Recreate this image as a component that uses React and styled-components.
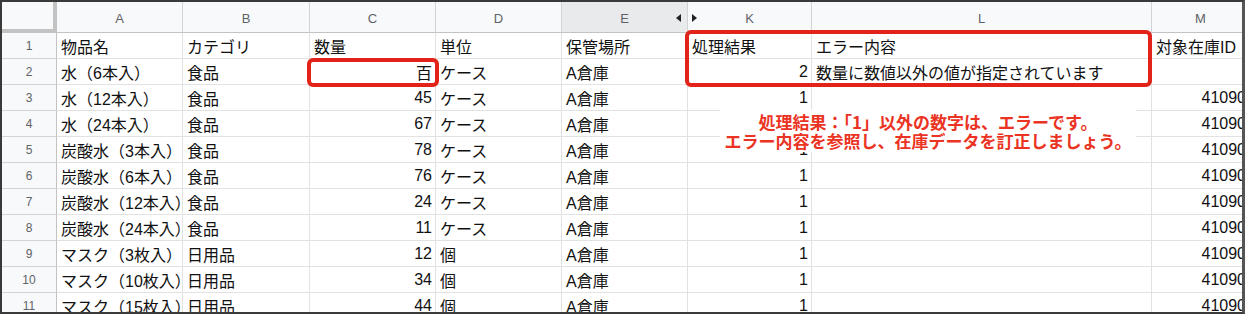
import React from "react";
import styled, { createGlobalStyle } from "styled-components";

const GlobalStyle = createGlobalStyle`
  body {
    margin: 0;
    background: #fff;
  }
`;

const COLS = [
  { key: "A", width: 126 },
  { key: "B", width: 127 },
  { key: "C", width: 126 },
  { key: "D", width: 126 },
  { key: "E", width: 126, hiddenAfter: true },
  { key: "K", width: 124, hiddenBefore: true },
  { key: "L", width: 340 },
  { key: "M", width: 98 },
];

// [A, B, C, D, E, K, L, M]
const ROWS = [
  ["物品名", "カテゴリ", "数量", "単位", "保管場所", "処理結果", "エラー内容", "対象在庫ID"],
  ["水（6本入）", "食品", "百", "ケース", "A倉庫", "2", "数量に数値以外の値が指定されています", ""],
  ["水（12本入）", "食品", "45", "ケース", "A倉庫", "1", "", "41090"],
  ["水（24本入）", "食品", "67", "ケース", "A倉庫", "1", "", "41090"],
  ["炭酸水（3本入）", "食品", "78", "ケース", "A倉庫", "1", "", "41090"],
  ["炭酸水（6本入）", "食品", "76", "ケース", "A倉庫", "1", "", "41090"],
  ["炭酸水（12本入）", "食品", "24", "ケース", "A倉庫", "1", "", "41090"],
  ["炭酸水（24本入）", "食品", "11", "ケース", "A倉庫", "1", "", "41090"],
  ["マスク（3枚入）", "日用品", "12", "個", "A倉庫", "1", "", "41090"],
  ["マスク（10枚入）", "日用品", "34", "個", "A倉庫", "1", "", "41090"],
  ["マスク（15枚入）", "日用品", "44", "個", "A倉庫", "1", "", "41090"],
];

const Frame = styled.div`
  position: relative;
  width: 1245px;
  height: 314px;
  overflow: hidden;
  box-sizing: border-box;
  padding: 2px 0 0 2px;
  background: #fff;
  font-family: "Liberation Sans", "Noto Sans CJK JP", sans-serif;

  &::after {
    content: "";
    position: absolute;
    inset: 0;
    border: 2px solid #3a3a3a;
    border-right: 3px solid #555;
    pointer-events: none;
  }
`;

const Grid = styled.div`
  display: grid;
  grid-template-columns: 55px ${COLS.map((c) => c.width + "px").join(" ")};
  grid-template-rows: 31px repeat(11, 26px);
`;

const Corner = styled.div`
  box-sizing: border-box;
  background: #f8f9fa;
  border-right: 4px solid #c3c3c3;
  border-bottom: 4px solid #c3c3c3;
`;

const ColHeader = styled.div`
  position: relative;
  box-sizing: border-box;
  display: flex;
  align-items: center;
  justify-content: center;
  background: ${(p) => (p.$shade ? "#e9eaeb" : "#f8f9fa")};
  border-right: 1px solid #d3d3d3;
  border-bottom: 1px solid #c3c3c3;
  color: #5f6368;
  font-size: 13px;
  padding-top: 2px;
`;

const ArrowLeft = styled.span`
  position: absolute;
  right: 6px;
  top: 12px;
  width: 0;
  height: 0;
  border-top: 4px solid transparent;
  border-bottom: 4px solid transparent;
  border-right: 5px solid #222;
`;

const ArrowRight = styled.span`
  position: absolute;
  left: 4px;
  top: 12px;
  width: 0;
  height: 0;
  border-top: 4px solid transparent;
  border-bottom: 4px solid transparent;
  border-left: 5px solid #222;
`;

const RowHeader = styled.div`
  box-sizing: border-box;
  display: flex;
  align-items: center;
  justify-content: center;
  background: #f8f9fa;
  border-right: 1px solid #c3c3c3;
  border-bottom: 1px solid #d3d3d3;
  color: #5f6368;
  font-size: 12px;
`;

const Cell = styled.div`
  box-sizing: border-box;
  display: flex;
  align-items: center;
  justify-content: ${(p) => (p.$right ? "flex-end" : "flex-start")};
  padding: 0 3px 0 4px;
  border-right: 1px solid #e2e2e2;
  border-bottom: 1px solid #e2e2e2;
  color: #111;
  font-size: 16px;
  white-space: nowrap;
  overflow: ${(p) => (p.$spill ? "visible" : "hidden")};
  position: relative;
`;

const Highlight = styled.div`
  position: absolute;
  left: ${(p) => p.$left}px;
  top: ${(p) => p.$top}px;
  width: ${(p) => p.$width}px;
  height: ${(p) => p.$height}px;
  box-sizing: border-box;
  border: 4px solid #e2231a;
  border-radius: 6px;
  pointer-events: none;
`;

const Note = styled.div`
  position: absolute;
  left: 720px;
  top: 110px;
  width: 416px;
  height: 42px;
  background: #fff;
  display: flex;
  flex-direction: column;
  align-items: center;
  justify-content: center;
  color: #eb3323;
  font-family: "Noto Sans CJK JP", sans-serif;
  font-size: 17px;
  font-weight: 700;
  line-height: 19px;
  white-space: nowrap;
`;

const isNumeric = (v) => /^\d+$/.test(v);

export default function App() {
  return (
    <>
      <GlobalStyle />
      <Frame>
        <Grid>
          <Corner />
          {COLS.map((c) => (
            <ColHeader key={c.key} $shade={c.hiddenAfter}>
              {c.hiddenBefore && <ArrowRight />}
              {c.key}
              {c.hiddenAfter && <ArrowLeft />}
            </ColHeader>
          ))}
          {ROWS.map((row, r) => (
            <React.Fragment key={r}>
              <RowHeader>{r + 1}</RowHeader>
              {row.map((v, c) => {
                const right = isNumeric(v) || (r === 1 && c === 2);
                const spill = c === 7 || (c === 6 && r > 0);
                return (
                  <Cell key={c} $right={right} $spill={spill}>
                    {v}
                  </Cell>
                );
              })}
            </React.Fragment>
          ))}
        </Grid>
        <Highlight $left={307} $top={58} $width={132} $height={29} />
        <Highlight $left={685} $top={30} $width={467} $height={57} />
        <Note>
          <span>処理結果：「1」以外の数字は、エラーです。</span>
          <span>エラー内容を参照し、在庫データを訂正しましょう。</span>
        </Note>
      </Frame>
    </>
  );
}
